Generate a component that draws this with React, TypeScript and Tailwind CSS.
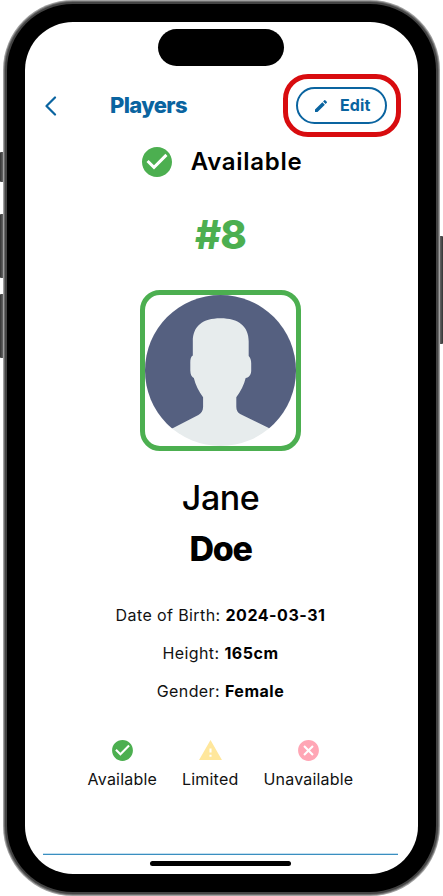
import React from "react";

const CHECK =
  "M12 2C6.48 2 2 6.48 2 12s4.48 10 10 10 10-4.48 10-10S17.52 2 12 2zm-2 15l-5-5 1.41-1.41L10 14.17l7.59-7.59L19 8l-9 9z";
const WARNING = "M1 21h22L12 2 1 21zm12-3h-2v-2h2v2zm0-4h-2v-4h2v4z";
const CANCEL =
  "M12 2C6.47 2 2 6.47 2 12s4.47 10 10 10 10-4.47 10-10S17.53 2 12 2zm5 13.59L15.59 17 12 13.41 8.41 17 7 15.59 10.59 12 7 8.41 8.41 7 12 10.59 15.59 7 17 8.41 13.41 12 17 15.59z";
const PENCIL =
  "M3 17.25V21h3.75L17.81 9.94l-3.75-3.75L3 17.25zM20.71 7.04a1 1 0 0 0 0-1.41l-2.34-2.34a1 1 0 0 0-1.41 0l-1.83 1.83 3.75 3.75 1.83-1.83z";

function Icon({ path, className }: { path: string; className: string }) {
  return (
    <svg viewBox="0 0 24 24" fill="currentColor" className={`shrink-0 ${className}`}>
      <path d={path} />
    </svg>
  );
}

function Avatar() {
  return (
    <svg viewBox="0 0 150 150" className="block h-[151px] w-[151px]">
      <defs>
        <clipPath id="disc">
          <circle cx="75" cy="75" r="75" />
        </clipPath>
      </defs>
      <g clipPath="url(#disc)">
        <rect width="150" height="132.6" fill="#556080" />
        <path
          fill="#e7eced"
          d="M75 23C57 23 47.5 31 47.5 46V60C45.5 61 45 64 45 67V75C45 79 46.5 81.500 48.500 82.500C50 89 53.500 96 57.700 101.500V111C57.700 115 56 117.500 53 119.200L27 132.500V150H124V132.500L95 118.500C92 116.800 90.700 114.500 90.700 111V101.500C95 96 98.500 89 100 82.500C103.500 82 105.500 79 105.500 75V68C105.500 65 104.800 62 103 60.500V46C103 31 93 23 75 23Z"
        />
      </g>
    </svg>
  );
}

function Info({ label, value }: { label: string; value: string }) {
  return (
    <p className="h-[38px] whitespace-pre text-center text-[16px] leading-[38px] tracking-[0.4px] text-[#111]">
      {label}: <span className="font-bold tracking-[0.52px] text-black">{value}</span>
    </p>
  );
}

function Legend({ icon, color, label }: { icon: string; color: string; label: string }) {
  return (
    <div className="flex flex-col items-center">
      <Icon path={icon} className={`ml-px h-[25px] w-[25px] ${color}`} />
      <span className="mt-1 whitespace-nowrap text-[16px] leading-6 tracking-[0.2px] text-[#111]">
        {label}
      </span>
    </div>
  );
}

export default function App() {
  return (
    <div className="flex h-[896px] w-[443px] overflow-hidden bg-white font-['Inter',sans-serif] text-black">
      <div className="flex w-[3px] flex-col pt-[152px]">
        <div className="h-[30px] rounded-l-[1px] bg-gradient-to-r from-[#333] to-[#666]" />
        <div className="mt-8 h-16 rounded-l-[1px] bg-gradient-to-r from-[#333] to-[#666]" />
        <div className="mt-4 h-16 rounded-l-[1px] bg-gradient-to-r from-[#333] to-[#666]" />
      </div>

      <div className="h-[896px] w-[437px] shrink-0 rounded-[70px] bg-[#a0a0a0] p-px">
        <div className="h-full rounded-[69px] bg-[#6b6b6b] p-px">
          <div className="h-full rounded-[68px] bg-[#444] p-[2px]">
            <div className="h-full rounded-[66px] bg-black p-[18px]">
              <main className="flex h-[852px] w-[393px] flex-col items-center overflow-hidden rounded-[48px] bg-white pr-[2px] pt-[7px]">
                <div className="h-[37px] w-[126px] shrink-0 rounded-full bg-black" />

                <header className="mt-2 flex h-[63px] w-full shrink-0 items-center pl-5 pr-[15px]">
                  <svg
                    viewBox="0 0 12 20"
                    fill="none"
                    stroke="#0a64a0"
                    strokeWidth="2.2"
                    strokeLinecap="round"
                    strokeLinejoin="round"
                    className="h-5 w-3"
                  >
                    <path d="M10 1.500L1.500 10L10 18.500" />
                  </svg>
                  <h1 className="mb-px ml-[53px] text-[22px] font-extrabold leading-8 tracking-[-0.65px] text-[#0a64a0]">
                    Players
                  </h1>
                  <div className="ml-auto h-[63px] w-[118px] rounded-[25px] border-[5px] border-[#d80c0f] p-2">
                    <button className="flex h-[37px] w-[91px] items-center rounded-[19px] border-2 border-[#0a64a0] pl-[15px] text-[#0a64a0]">
                      <Icon path={PENCIL} className="h-4 w-4" />
                      <span className="mb-px ml-[11px] text-[16px] font-bold leading-5 tracking-[0.1px]">Edit</span>
                    </button>
                  </div>
                </header>

                <div className="mt-[7px] flex h-9 shrink-0 items-center">
                  <Icon path={CHECK} className="h-9 w-9 text-[#4caf50]" />
                  <span className="ml-4 text-[24px] font-semibold leading-9 tracking-[0.7px]">Available</span>
                </div>

                <p className="mt-[31px] h-12 shrink-0 text-[40px] font-extrabold leading-[48px] tracking-[-0.8px] text-[#4caf50]">
                  #8
                </p>

                <div className="mt-[31px] shrink-0 rounded-[20px] border-[5px] border-[#4caf50]">
                  <Avatar />
                </div>

                <p className="mt-[21px] h-[51px] shrink-0 text-[34px] leading-[51px] tracking-[-0.5px] [font-weight:450]">
                  Jane
                </p>
                <p className="h-[51px] shrink-0 text-[34px] font-extrabold leading-[51px] tracking-[-1.3px]">Doe</p>

                <div className="mt-[22px] shrink-0">
                  <Info label="Date of Birth" value="2024-03-31" />
                  <Info label="Height" value="165cm" />
                  <Info label="Gender" value="Female" />
                </div>

                <div className="mt-7 flex shrink-0 gap-[25px]">
                  <Legend icon={CHECK} color="text-[#4caf50]" label="Available" />
                  <Legend icon={WARNING} color="text-[#ffe79c]" label="Limited" />
                  <Legend icon={CANCEL} color="text-[#ffa6b5]" label="Unavailable" />
                </div>

                <div className="mb-2 mt-auto flex w-full flex-col items-center">
                  <div className="h-[2px] w-[355px] border-t border-[#c3dff0] bg-[#3a8fc0]" />
                  <div className="mt-[6px] h-[5px] w-[141px] rounded-full bg-black" />
                </div>
              </main>
            </div>
          </div>
        </div>
      </div>

      <div className="flex w-[3px] flex-col pt-[236px]">
        <div className="h-[108px] rounded-r-[1px] bg-gradient-to-r from-[#666] to-[#333]" />
      </div>
    </div>
  );
}
